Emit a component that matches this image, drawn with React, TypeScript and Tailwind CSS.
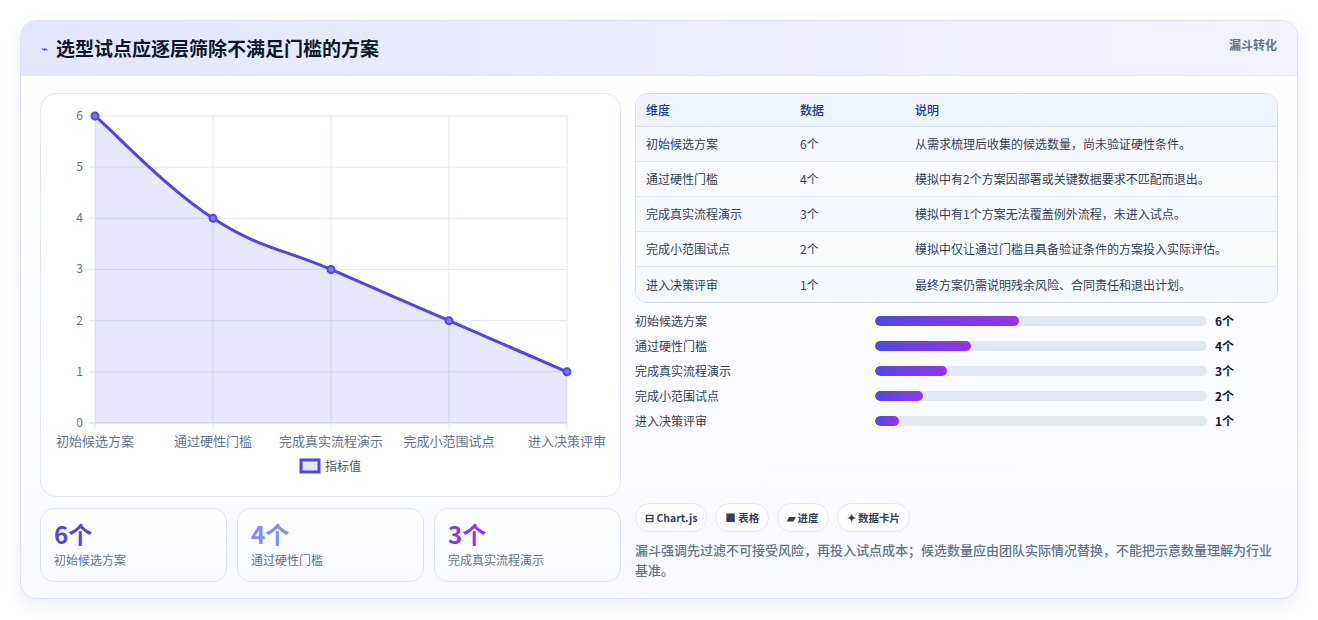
import React from "react";

const rows = [
  ["初始候选方案", 6, "从需求梳理后收集的候选数量，尚未验证硬性条件。"],
  ["通过硬性门槛", 4, "模拟中有2个方案因部署或关键数据要求不匹配而退出。"],
  ["完成真实流程演示", 3, "模拟中有1个方案无法覆盖例外流程，未进入试点。"],
  ["完成小范围试点", 2, "模拟中仅让通过门槛且具备验证条件的方案投入实际评估。"],
  ["进入决策评审", 1, "最终方案仍需说明残余风险、合同责任和退出计划。"],
] as const;

const xs = [54, 172, 290, 408, 526];
const yOf = (v: number) => 329 - v * 51.17;

function Chart() {
  const pts = rows.map((r, i) => [xs[i], yOf(r[1])]);
  let d = `M${pts[0][0]},${pts[0][1]}`;
  const t = 0.2;
  for (let i = 0; i < pts.length - 1; i++) {
    const p0 = pts[Math.max(0, i - 1)], p1 = pts[i], p2 = pts[i + 1], p3 = pts[Math.min(pts.length - 1, i + 2)];
    const c1 = [p1[0] + (p2[0] - p0[0]) * t, p1[1] + (p2[1] - p0[1]) * t];
    const c2 = [p2[0] - (p3[0] - p1[0]) * t, p2[1] - (p3[1] - p1[1]) * t];
    d += ` C${c1[0]},${c1[1]} ${c2[0]},${c2[1]} ${p2[0]},${p2[1]}`;
  }
  const area = d + ` L526,329 L54,329 Z`;
  return (
    <svg width="580" height="401" className="block">
      {[0, 1, 2, 3, 4, 5, 6].map((v) => (
        <g key={v}>
          <line x1={48} x2={526} y1={yOf(v)} y2={yOf(v)} stroke={v === 0 ? "#cbd5e1" : "#e2e8f0"} />
          <text x={42} y={yOf(v) + 4} fontSize="12" fill="#64748b" textAnchor="end">{v}</text>
        </g>
      ))}
      {xs.map((x) => (
        <line key={x} x1={x} x2={x} y1={22} y2={335} stroke="#e2e8f0" />
      ))}
      <path d={area} fill="rgba(99,91,230,0.15)" />
      <path d={d} fill="none" stroke="#4f46e5" strokeWidth="3" />
      {pts.map((p, i) => (
        <circle key={i} cx={p[0]} cy={p[1]} r="3.5" fill="#7c75ee" stroke="#4f46e5" strokeWidth="2" />
      ))}
      {rows.map((r, i) => (
        <text key={i} x={xs[i]} y={352} fontSize="13" fill="#64748b" textAnchor="middle">{r[0]}</text>
      ))}
      <rect x={260} y={366} width={18} height={12} fill="rgba(99,91,230,0.15)" stroke="#4f46e5" strokeWidth="3" />
      <text x={284} y={377} fontSize="12" fill="#475569">指标值</text>
    </svg>
  );
}

export default function App() {
  return (
    <div className="bg-white w-[1318px] h-[620px] pt-[20px] pl-[20px]" style={{ fontFamily: '"Noto Sans CJK SC", "Noto Sans", sans-serif' }}>
      <div className="w-[1278px] h-[579px] rounded-[16px] border border-[#dde1f5] overflow-hidden shadow-[0_6px_16px_rgba(80,90,160,0.12)] bg-gradient-to-b from-white to-[#f8f9ff]">
        <div className="h-[55px] flex items-center justify-between px-[20px] bg-gradient-to-r from-[#e4e7fb] to-[#f3f2ff] border-b border-[#e4e7f5]">
          <div className="flex items-center gap-[8px]">
            <span className="text-[#4f46e5] text-[12px]">⌁</span>
            <span className="text-[19px] font-bold text-[#0f172a]">选型试点应逐层筛除不满足门槛的方案</span>
          </div>
          <span className="text-[12px] font-bold text-[#64748b] self-start mt-[15px]">漏斗转化</span>
        </div>
        <div className="flex gap-[14px] px-[19px] pt-[17px]">
          <div className="w-[581px] flex flex-col gap-[11px]">
            <div className="h-[404px] rounded-[16px] border border-[#e2e8f0] bg-white">
              <Chart />
            </div>
            <div className="grid grid-cols-3 gap-[10px]">
              {[
                ["6个", "初始候选方案", "text-[#4f46e5]"],
                ["4个", "通过硬性门槛", "text-[#818cf8]"],
                ["3个", "完成真实流程演示", "text-[#9333ea]"],
              ].map(([n, l, c]) => (
                <div key={l} className="h-[74px] rounded-[14px] border border-[#dbe4f3] bg-gradient-to-b from-white to-[#f8faff] px-[13px] pt-[10px]">
                  <div className={`text-[24px] font-bold leading-[30px] ${c}`}>{n}</div>
                  <div className="text-[12px] text-[#64748b] mt-[2px]">{l}</div>
                </div>
              ))}
            </div>
          </div>
          <div className="w-[643px] flex flex-col">
            <div className="rounded-[12px] border border-[#d8deea] overflow-hidden text-[12px] text-[#334155]">
              <div className="flex h-[33px] items-center bg-[#eef4ff] text-[#1e3a8a] font-medium border-b border-[#d8deea]">
                <div className="w-[164px] pl-[10px]">维度</div>
                <div className="w-[115px]">数据</div>
                <div>说明</div>
              </div>
              {rows.map((r, i) => (
                <div key={i} className={`flex h-[35px] items-center ${i % 2 ? "bg-[#f8fafc]" : "bg-[#f6f8ff]"} ${i < 4 ? "border-b border-[#e2e8f0]" : ""}`}>
                  <div className="w-[164px] pl-[10px]">{r[0]}</div>
                  <div className="w-[115px]">{r[1]}个</div>
                  <div>{r[2]}</div>
                </div>
              ))}
            </div>
            <div className="flex flex-col gap-[7px] mt-[9px]">
              {rows.map((r, i) => (
                <div key={i} className="flex items-center h-[18px] text-[12px]">
                  <div className="w-[240px] text-[#334155]">{r[0]}</div>
                  <div className="w-[332px] h-[10px] rounded-full bg-[#e2e8f0] overflow-hidden">
                    <div className="h-full rounded-full bg-gradient-to-r from-[#4f46e5] to-[#9333ea]" style={{ width: `${r[1] * 7.23}%` }} />
                  </div>
                  <div className="ml-[8px] font-bold text-[#0f172a]">{r[1]}个</div>
                </div>
              ))}
            </div>
            <div className="flex gap-[8px] mt-[73px]">
              {["⊟ Chart.js", "■ 表格", "▰ 进度", "✦ 数据卡片"].map((t) => (
                <span key={t} className="h-[29px] px-[9px] flex items-center rounded-full border border-[#e2e8f0] bg-white text-[10.5px] font-bold text-[#334155]">{t}</span>
              ))}
            </div>
            <p className="mt-[8px] text-[13px] leading-[20px] text-[#64748b] font-medium">漏斗强调先过滤不可接受风险，再投入试点成本；候选数量应由团队实际情况替换，不能把示意数量理解为行业基准。</p>
          </div>
        </div>
      </div>
    </div>
  );
}
